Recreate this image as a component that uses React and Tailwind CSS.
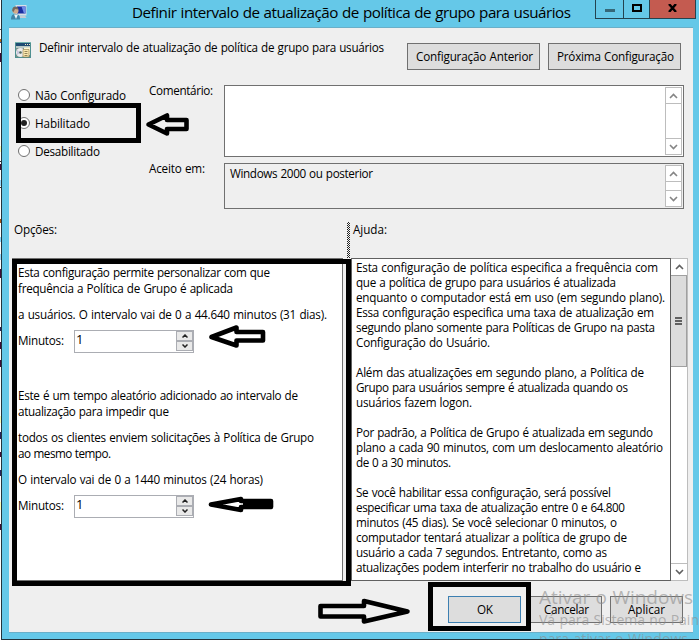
import React, { useLayoutEffect, useRef } from "react";

// One line of text, tracked so that it spans the given width.
function Line({ w, className = "", children }) {
  const ref = useRef(null);
  useLayoutEffect(() => {
    const el = ref.current;
    el.style.letterSpacing = "0px";
    const natural = el.getBoundingClientRect().width;
    el.style.letterSpacing = `${(w - natural) / Math.max(1, children.length - 1)}px`;
  }, [w, children]);
  return (
    <span className={`block w-0 whitespace-pre [word-spacing:0.6px] ${className}`}>
      <span ref={ref} className="inline-block -translate-y-px">{children}</span>
    </span>
  );
}

function Chevron({ up, className = "text-[#858585]" }) {
  return (
    <svg width="9" height="6" viewBox="0 0 9 6" className={className} fill="none" stroke="currentColor" strokeWidth="1.6">
      <path d={up ? "M1 5L4.5 1.5L8 5" : "M1 1L4.5 4.5L8 1"} />
    </svg>
  );
}

function ScrollBar() {
  return (
    <div className="mr-px my-px flex w-[17px] flex-col border border-[#bdbdbd] bg-white">
      <div className="flex h-4 shrink-0 items-center justify-center border-b border-[#bdbdbd]"><Chevron up /></div>
      <div className="flex-1" />
      <div className="flex h-4 shrink-0 items-center justify-center border-t border-[#bdbdbd]"><Chevron /></div>
    </div>
  );
}

function Radio({ label, w, checked }) {
  return (
    <div className="flex h-7 items-center">
      <span className="flex size-3 items-center justify-center rounded-full border border-[#707070] bg-white">
        {checked && <span className="size-1.5 rounded-full bg-[#212121]" />}
      </span>
      <Line w={w} className="ml-[5px] pt-px">{label}</Line>
    </div>
  );
}

function Button({ label, w, className = "", pad }) {
  return (
    <div className={`flex h-[27px] items-center border bg-[#dddddd] ${className}`}>
      <Line w={w} className={pad}>{label}</Line>
    </div>
  );
}

function Minutes() {
  return (
    <div className="flex h-[23px]">
      <Line w={46} className="pt-[3px]">Minutos:</Line>
      <div className="ml-14 flex h-[23px] w-[120px] justify-between border border-[#abadb3] bg-white">
        <Line w={5} className="ml-px text-[13px] leading-[19px]">1</Line>
        <div className="flex h-[21px] w-[17px] flex-col pb-px">
          {[true, false].map((up) => (
            <div key={String(up)} className="flex flex-1 items-center justify-center border border-[#abadb3] bg-[#e9e9e9]">
              <svg width="6" height="4" viewBox="0 0 6 4" fill="none" stroke="#222" strokeWidth="1.5">
                <path d={up ? "M.5 3.5L3 1L5.5 3.5" : "M.5 .5L3 3L5.5 .5"} />
              </svg>
            </div>
          ))}
        </div>
      </div>
    </div>
  );
}

const help = [
  ["Esta configuração de política especifica a frequência com", 302],
  ["que a política de grupo para usuários é atualizada", 260],
  ["enquanto o computador está em uso (em segundo plano).", 309],
  ["Essa configuração especifica uma taxa de atualização em", 298],
  ["segundo plano somente para Políticas de Grupo na pasta", 299],
  ["Configuração do Usuário.", 134],
  null,
  ["Além das atualizações em segundo plano, a Política de", 288],
  ["Grupo para usuários sempre é atualizada quando os", 272],
  ["usuários fazem logon.", 116],
  null,
  ["Por padrão, a Política de Grupo é atualizada em segundo", 297],
  ["plano a cada 90 minutos, com um deslocamento aleatório", 307],
  ["de 0 a 30 minutos.", 95],
  null,
  ["Se você habilitar essa configuração, será possível", 255],
  ["especificar uma taxa de atualização entre 0 e 64.800", 269],
  ["minutos (45 dias). Se você selecionar 0 minutos, o", 261],
  ["computador tentará atualizar a política de grupo de", 271],
  ["usuário a cada 7 segundos. Entretanto, como as", 251],
  ["atualizações podem interferir no trabalho do usuário e", 285],
];

const strip = [
  [29, 1, "bg-[#555]"], [39, 3, "bg-[#b86a18]"], [42, 1, "bg-[#1a4fae]"], [53, 9, "bg-[#3f0b38]"],
  [146, 6, "bg-[#ffffb8]"], [161, 1, "bg-[#333]"], [164, 6, "bg-[#3f0b38]"], [180, 6, "bg-[#9bdcff]"],
  [187, 1, "bg-[#333]"], [219, 4, "bg-[#a65312]"], [237, 5, "bg-[#8bdcff]"], [254, 6, "bg-[#9bdcff]"],
  [269, 9, "bg-[#3f0b38]"], [327, 4, "bg-[#26215c]"], [342, 7, "bg-[#3f0b38]"], [360, 7, "bg-[#3f0b38]"],
  [416, 7, "bg-[#ffffb8]"], [432, 7, "bg-[#26215c]"], [452, 5, "bg-[#3f0b38]"], [470, 6, "bg-[#26215c]"],
  [502, 8, "bg-[#ffffb8]"], [524, 6, "bg-[#3f0b38]"],
];

export default function App() {
  return (
    <div className="relative flex h-[640px] w-[699px] overflow-hidden bg-white font-['Open_Sans','Noto_Sans',sans-serif] text-[11.7px] leading-4 text-black">
      <div className="relative w-px shrink-0">
        {strip.map(([y, h, c]) => (
          <span key={y} className={`absolute left-0 w-px ${c}`} style={{ top: y, height: h }} />
        ))}
      </div>
      <div className="flex w-[698px] shrink-0 flex-col border-b border-l border-[#22343c] bg-[#65c8e8]">
        {/* title bar */}
        <div className="flex h-[27px] shrink-0">
          <svg width="17" height="17" viewBox="0 0 17 17" className="ml-[9px] mt-1">
            <path d="M4.500 1h11v10.500h-11z" fill="#d9dfe8" />
            <path d="M6 2.500h8.500v7H6z" fill="#1a2fa0" />
            <path d="M10.500 2.500h4v7h-1.500z" fill="#6f8ce8" />
            <path d="M9 11.500h5l1.500 2.500H9z" fill="#c4cbd4" />
            <path d="M0 15.500c0-4.500 2-5.500 4.500-5.500s4.500 1 4.500 5.500z" fill="#3f86a8" />
            <path d="M3 10.500l2 4.500 2-4.500z" fill="#eaf5fa" />
            <circle cx="4.500" cy="6.800" r="3" fill="#cfa98a" />
            <path d="M1.200 7c-.5-6 6.300-5.500 6.300-1.500L4 5 2.500 8z" fill="#75695f" />
          </svg>
          <Line w={439} className="ml-[104px] text-[15.2px] leading-[26px]">Definir intervalo de atualização de política de grupo para usuários</Line>
          <div className="ml-[463px] flex h-[19px] w-[101px] border border-t-0 border-[#24434f]">
            <div className="flex w-7 justify-center border-r border-[#24434f] pt-[9px]"><span className="h-[3px] w-[10px] bg-[#356878]" /></div>
            <div className="flex w-[26px] justify-center border-r border-[#24434f] pt-1"><span className="h-2 w-[10px] border-2 border-black" /></div>
            <div className="flex flex-1 justify-center bg-[#c45b50] pt-1">
              <svg width="9" height="8" viewBox="0 0 9 8" stroke="#000" strokeWidth="2.4"><path d="M1 0L8 8M8 0L1 8" /></svg>
            </div>
          </div>
        </div>

        <div className="ml-[7px] flex h-[606px] w-[684px] shrink-0 flex-col border-b border-t border-[#6aafc8] bg-[#efefef]">
          {/* heading */}
          <div className="flex h-[57px] shrink-0">
            <svg width="16" height="16" viewBox="0 0 16 16" className="ml-1.5 mt-[14px]">
              <path d="M0 0h16v16H0z" fill="#4f8f90" />
              <path d="M0 0h16v1H0z" fill="#75b3ad" />
              <path d="M1 1h14v3H1z" fill="#1f4c72" />
              <path d="M10 2h1v1h-1zM12 2h1v1h-1zM14 2h1v1h-1z" fill="#f0e6c0" />
              <path d="M1 4h14v2H1z" fill="#b9c9c5" />
              <path d="M1 6h14v9H1z" fill="#76918b" />
              <circle cx="5.500" cy="10.500" r="4.500" fill="#ececec" />
              <path d="M5.500 10.500L2 8v5z" fill="#c9c5dc" />
              <circle cx="5.500" cy="10.500" r="1.300" fill="#4e6a62" />
              <path d="M9 5.500h6v7.500H9z" fill="#fff6cf" />
              <path d="M8 7.500h6V15H8z" fill="#fbe9b0" stroke="#8f7a48" strokeWidth=".6" />
              <path d="M9.500 9.500h3M9.500 11.500h3M9.500 13.500h3" stroke="#7b6b45" strokeWidth=".8" />
            </svg>
            <Line w={345} className="ml-2 mt-3">Definir intervalo de atualização de política de grupo para usuários</Line>
            <div className="ml-[368px] mt-[15px] flex gap-2">
              <Button label="Configuração Anterior" w={117} pad="ml-2" className="w-[133px] border-[#707070]" />
              <Button label="Próxima Configuração" w={117} pad="ml-2" className="w-[133px] border-[#707070]" />
            </div>
          </div>

          {/* state and comment */}
          <div className="flex h-[137px] shrink-0">
            <div className="ml-[9px] mt-[-4px] w-[131px]">
              <Radio label="Não Configurado" w={91} />
              <Radio label="Habilitado" w={55} checked />
              <Radio label="Desabilitado" w={65} />
            </div>
            <div className="flex w-[75px] flex-col">
              <Line w={64} className="mt-[-2px] h-[78px]">Comentário:</Line>
              <Line w={56}>Aceito em:</Line>
            </div>
            <div className="flex w-[460px] flex-col gap-1.5">
              <div className="flex h-[72px] justify-end border border-[#707070] bg-white"><ScrollBar /></div>
              <div className="flex h-[46px] justify-between border border-[#707070]">
                <Line w={143} className="ml-[5px] mt-0.5">Windows 2000 ou posterior</Line>
                <ScrollBar />
              </div>
            </div>
          </div>

          {/* column captions */}
          <div className="flex h-9 shrink-0">
            <Line w={43} className="ml-[5px]">Opções:</Line>
            <div className="ml-[333px] h-9 w-[3px] bg-[repeating-conic-gradient(#222_0_25%,#f8f8f8_0_50%)] bg-[length:2px_2px]" />
            <Line w={34} className="ml-[3px]">Ajuda:</Line>
          </div>

          {/* options and help */}
          <div className="flex h-[323px] shrink-0">
            <div className="ml-[3px] flex w-[331px] flex-col border border-[#707070] bg-white pl-[5px] pt-1.5">
              <Line w={252}>Esta configuração permite personalizar com que</Line>
              <Line w={215}>frequência a Política de Grupo é aplicada</Line>
              <Line w={309} className="mb-[7px] mt-2.5">a usuários. O intervalo vai de 0 a 44.640 minutos (31 dias).</Line>
              <Minutes />
              <Line w={280} className="mt-[35px]">Este é um tempo aleatório adicionado ao intervalo de</Line>
              <Line w={151}>atualização para impedir que</Line>
              <Line w={296} className="mt-2.5">todos os clientes enviem solicitações à Política de Grupo</Line>
              <Line w={93}>ao mesmo tempo.</Line>
              <Line w={245} className="mb-[7px] mt-2.5">O intervalo vai de 0 a 1440 minutos (24 horas)</Line>
              <Minutes />
            </div>
            <div className="ml-2 flex w-[320px] flex-col border border-[#606060] bg-white pl-1 pt-0.5 leading-[15px]">
              {help.map((l, i) => l
                ? <Line key={i} w={l[1]}>{l[0]}</Line>
                : <div key={i} className="h-[15px]" />)}
            </div>
            <div className="flex w-[17px] flex-col border border-l-0 border-[#bdbdbd] bg-white">
              <div className="flex h-4 items-center justify-center"><Chevron up className="text-[#606060]" /></div>
              <div className="flex h-[92px] flex-col items-center justify-center gap-px border-y border-r border-[#a0a0a0] bg-[#dcdcdc]">
                <span className="h-0.5 w-[7px] bg-[#606060]" />
                <span className="h-0.5 w-[7px] bg-[#606060]" />
                <span className="h-0.5 w-[7px] bg-[#606060]" />
              </div>
              <div className="flex-1" />
              <div className="flex h-[17px] items-center justify-center border-t border-[#bdbdbd]"><Chevron className="text-[#606060]" /></div>
            </div>
          </div>

          {/* actions */}
          <div className="ml-[439px] mt-[15px] flex gap-2">
            <Button label="OK" w={16} pad="ml-7" className="w-[73px] border-[#3c7fb1]" />
            <Button label="Cancelar" w={45} pad="ml-[14px]" className="w-[73px] border-[#707070]" />
            <Button label="Aplicar" w={37} pad="ml-[17px]" className="w-[73px] border-[#707070]" />
          </div>
        </div>
      </div>

      {/* activation watermark over the window */}
      <div className="absolute left-[539px] top-[584px] h-[55px] w-[160px] overflow-hidden text-[#8c8c8c]/60">
        <Line w={154} className="text-[19px] leading-7">Ativar o Windows</Line>
        <Line w={160} className="text-[14px] leading-[18px]">Vá para Sistema no Pain</Line>
        <Line w={149} className="text-[14px] leading-[19px]">para ativar o Windows</Line>
      </div>

      {/* hand-drawn annotations */}
      <div className="absolute left-4 top-[103px] h-10 w-[125px] border-[5px] border-black" />
      <div className="absolute left-3 top-[259px] h-[327px] w-[339px] border-[5px] border-black" />
      <div className="absolute left-[428px] top-[582px] h-[49px] w-[103px] border-[5px] border-black" />
      <svg width="699" height="640" className="absolute left-0 top-0" fill="none" stroke="#000" strokeWidth="4.6" strokeLinejoin="round">
        <path d="M148.5 124.5L167 115.500V120H186.500V129H167V133.500Z" />
        <path d="M211.500 337L236.500 327.500V332H263V340.500H236.500V345.500Z" />
        <path d="M211 504.500L241 499V501H271V507H241V510Z" />
        <path d="M243 504H271" />
        <path d="M320.500 606H364V601L407.500 611.500L364 621.500V616.500H320.500Z" />
      </svg>
    </div>
  );
}
